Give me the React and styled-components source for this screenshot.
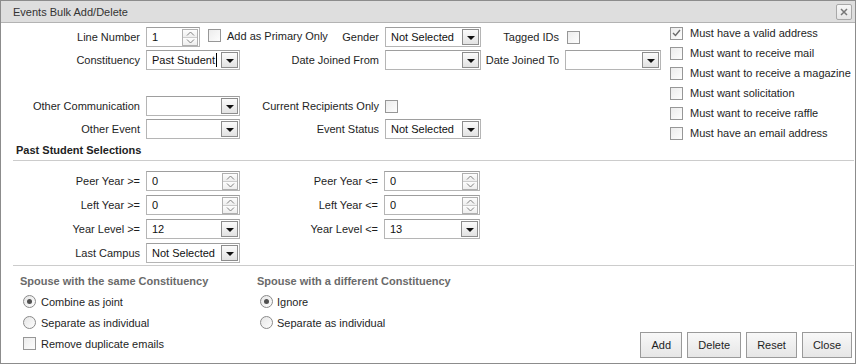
import React from 'react';
import styled, { createGlobalStyle } from 'styled-components';

const Global = createGlobalStyle`
  * { box-sizing: border-box; }
  html, body { margin: 0; padding: 0; background: #fff; }
  body {
    font-family: "Liberation Sans", Arial, sans-serif;
    font-size: 11px;
    color: #1e1e1e;
  }
`;

const Dialog = styled.div`
  width: 856px;
  height: 364px;
  border: 1px solid #8c8c8c;
  display: flex;
  flex-direction: column;
  background: #fff;
`;

const TitleBar = styled.div`
  height: 22px;
  flex: none;
  background: #dedede;
  border-bottom: 1px solid #b3b3b3;
  display: flex;
  align-items: center;
  justify-content: space-between;
  padding: 0 3px 0 12px;
`;

const Title = styled.span`
  color: #333;
  font-size: 11px;
`;

const CloseButton = styled.span`
  width: 16px;
  height: 16px;
  border: 1px solid #a8a8a8;
  border-radius: 2px;
  background: linear-gradient(#f6f6f6, #e6e6e6);
  display: flex;
  align-items: center;
  justify-content: center;
`;

const Body = styled.div`
  flex: 1;
  display: flex;
  flex-direction: column;
  padding: 0 3px 0 12px;
`;

const TopSection = styled.div`
  display: flex;
  align-items: flex-start;
  gap: 9px;
`;

const FieldGrid = styled.div`
  display: grid;
  grid-template-columns: 127px 94px 133px 96px 72px 96px;
  grid-template-rows: repeat(5, 20px);
  column-gap: 6px;
  row-gap: 3px;
  margin-top: 4px;
`;

const Label = styled.span`
  display: flex;
  align-items: center;
  justify-content: flex-end;
  white-space: nowrap;
  grid-column: ${p => p.$col || 'auto'};
  grid-row: ${p => p.$row || 'auto'};
`;

const Cell = styled.div`
  display: flex;
  align-items: center;
  white-space: nowrap;
  grid-column: ${p => p.$col || 'auto'};
  grid-row: ${p => p.$row || 'auto'};
`;

const Spacer = styled.span`
  flex: 1;
`;

const SelectBox = styled.div`
  width: ${p => p.$w || 94}px;
  height: 20px;
  flex: none;
  border: 1px solid #b5b5b5;
  border-top-color: #9e9e9e;
  background: #fff;
  display: flex;
  align-items: center;
  padding: 0 1px 0 5px;
`;

const FieldText = styled.span`
  flex: 1;
  white-space: nowrap;
  overflow: hidden;
  display: flex;
  align-items: center;
  color: #111;
  font-size: 11px;
`;

const Caret = styled.span`
  width: 1px;
  height: 14px;
  background: #000;
  margin-left: 1px;
`;

const DropButton = styled.span`
  width: 17px;
  height: 16px;
  border: 1px solid #8d8d8d;
  background: linear-gradient(#fbfbfb, #e2e2e2);
  display: flex;
  align-items: center;
  justify-content: center;
`;

const Arrow = styled.span`
  width: 0;
  height: 0;
  border-left: 4px solid transparent;
  border-right: 4px solid transparent;
  border-top: 4px solid #111;
  margin-top: 1px;
`;

const SpinButtons = styled.div`
  width: 16px;
  height: 17px;
  display: flex;
  flex-direction: column;
  border: 1px solid #b0b0b0;
`;

const SpinHalf = styled.span`
  flex: 1;
  display: flex;
  align-items: center;
  justify-content: center;
  background: linear-gradient(#fdfdfd, #eeeeee);
  & + & { border-top: 1px solid #cccccc; }
`;

const Box = styled.span`
  width: 13px;
  height: 13px;
  flex: none;
  border: 1px solid #979797;
  background: linear-gradient(135deg, #ececec, #fdfdfd);
  display: flex;
  align-items: center;
  justify-content: center;
  margin-left: ${p => p.$ml || 0}px;
`;

const RadioCircle = styled.span`
  width: 13px;
  height: 13px;
  flex: none;
  border: 1px solid #8a8a8a;
  border-radius: 50%;
  background: linear-gradient(135deg, #e6e6e6, #fdfdfd);
  display: flex;
  align-items: center;
  justify-content: center;
`;

const Dot = styled.span`
  width: 5px;
  height: 5px;
  border-radius: 50%;
  background: #505050;
`;

const OptionList = styled.div`
  display: flex;
  flex-direction: column;
`;

const OptionRow = styled.div`
  height: ${p => p.$h || 20}px;
  display: flex;
  align-items: center;
  gap: ${p => p.$gap || 7}px;
  white-space: nowrap;
`;

const InlineOption = styled.span`
  display: flex;
  align-items: center;
  gap: 6px;
  margin-left: 8px;
  margin-top: -3px;
  white-space: nowrap;
`;

const SectionHeading = styled.div`
  font-weight: bold;
  color: #222;
  line-height: 14px;
  padding-left: 3px;
`;

const Divider = styled.div`
  height: 1px;
  background: #cccccc;
  margin-top: ${p => p.$mt || 0}px;
  margin-right: -2px;
`;

const RangeGrid = styled.div`
  display: grid;
  grid-template-columns: 127px 94px 132px 96px;
  grid-auto-rows: 20px;
  column-gap: 6px;
  row-gap: 4px;
  margin-top: 10px;
`;

const SpouseSection = styled.div`
  flex: 1;
  display: flex;
  padding: 8px 0 5px;
`;

const SpouseColumn = styled.div`
  width: ${p => p.$w ? `${p.$w}px` : 'auto'};
  padding-left: ${p => p.$pl || 0}px;
  display: flex;
  flex-direction: column;
`;

const SpouseHeading = styled.div`
  font-weight: bold;
  color: #6a6a6a;
  line-height: 14px;
  margin-bottom: 3px;
`;

const Options = styled.div`
  padding-left: 3px;
  display: flex;
  flex-direction: column;
`;

const ButtonBar = styled.div`
  margin-left: auto;
  align-self: flex-end;
  display: flex;
  gap: 5px;
`;

const Button = styled.button`
  height: 26px;
  min-width: 42px;
  padding: 0 10px;
  border: 1px solid #9a9a9a;
  background: linear-gradient(#f8f8f8, #e6e6e6);
  font-family: "Liberation Sans", Arial, sans-serif;
  font-size: 11px;
  color: #1e1e1e;
  cursor: pointer;
`;

const Select = ({ w, value, caret }) => (
  <SelectBox $w={w}>
    <FieldText>
      {value}
      {caret && <Caret />}
    </FieldText>
    <DropButton><Arrow /></DropButton>
  </SelectBox>
);

const Chevron = ({ up }) => (
  <svg width="9" height="5" viewBox="0 0 9 5">
    <polyline
      points={up ? '1,4.5 4.5,1 8,4.5' : '1,0.5 4.5,4 8,0.5'}
      fill="none"
      stroke="#808080"
      strokeWidth="1"
    />
  </svg>
);

const Spinner = ({ w, value }) => (
  <SelectBox $w={w}>
    <FieldText>{value}</FieldText>
    <SpinButtons>
      <SpinHalf><Chevron up /></SpinHalf>
      <SpinHalf><Chevron /></SpinHalf>
    </SpinButtons>
  </SelectBox>
);

const Checkbox = ({ checked, ml }) => (
  <Box $ml={ml}>
    {checked && (
      <svg width="9" height="8" viewBox="0 0 9 8">
        <polyline points="1,4 3.5,6.5 8,1" fill="none" stroke="#6b6b6b" strokeWidth="1.4" />
      </svg>
    )}
  </Box>
);

const Radio = ({ checked }) => (
  <RadioCircle>{checked && <Dot />}</RadioCircle>
);

const mustOptions = [
  ['Must have a valid address', true],
  ['Must want to receive mail', false],
  ['Must want to receive a magazine', false],
  ['Must want solicitation', false],
  ['Must want to receive raffle', false],
  ['Must have an email address', false],
];

export default function App() {
  return (
    <>
      <Global />
      <Dialog>
        <TitleBar>
          <Title>Events Bulk Add/Delete</Title>
          <CloseButton>
            <svg width="8" height="8" viewBox="0 0 8 8">
              <path d="M1 1 L7 7 M7 1 L1 7" stroke="#777" strokeWidth="1.5" />
            </svg>
          </CloseButton>
        </TitleBar>
        <Body>
          <TopSection>
            <FieldGrid>
              <Label $col="1" $row="1">Line Number</Label>
              <Cell $col="2 / 4" $row="1">
                <Spinner w={54} value="1" />
                <InlineOption>
                  <Checkbox />
                  <span>Add as Primary Only</span>
                </InlineOption>
                <Spacer />
                <Label>Gender</Label>
              </Cell>
              <Cell $col="4" $row="1"><Select w={96} value="Not Selected" /></Cell>
              <Label $col="5" $row="1">Tagged IDs</Label>
              <Cell $col="6" $row="1"><Checkbox ml={2} /></Cell>

              <Label $col="1" $row="2">Constituency</Label>
              <Cell $col="2" $row="2"><Select value="Past Student" caret /></Cell>
              <Label $col="3" $row="2">Date Joined From</Label>
              <Cell $col="4" $row="2"><Select w={96} value="" /></Cell>
              <Label $col="5" $row="2">Date Joined To</Label>
              <Cell $col="6" $row="2"><Select w={96} value="" /></Cell>

              <Label $col="1" $row="4">Other Communication</Label>
              <Cell $col="2" $row="4"><Select value="" /></Cell>
              <Label $col="3" $row="4">Current Recipients Only</Label>
              <Cell $col="4" $row="4"><Checkbox /></Cell>

              <Label $col="1" $row="5">Other Event</Label>
              <Cell $col="2" $row="5"><Select value="" /></Cell>
              <Label $col="3" $row="5">Event Status</Label>
              <Cell $col="4" $row="5"><Select w={96} value="Not Selected" /></Cell>
            </FieldGrid>
            <OptionList>
              {mustOptions.map(([text, checked]) => (
                <OptionRow key={text}>
                  <Checkbox checked={checked} />
                  <span>{text}</span>
                </OptionRow>
              ))}
            </OptionList>
          </TopSection>

          <SectionHeading>Past Student Selections</SectionHeading>
          <Divider $mt={3} />

          <RangeGrid>
            <Label>{'Peer Year >='}</Label>
            <Cell><Spinner value="0" /></Cell>
            <Label>{'Peer Year <='}</Label>
            <Cell><Spinner w={96} value="0" /></Cell>

            <Label>{'Left Year >='}</Label>
            <Cell><Spinner value="0" /></Cell>
            <Label>{'Left Year <='}</Label>
            <Cell><Spinner w={96} value="0" /></Cell>

            <Label>{'Year Level >='}</Label>
            <Cell><Select value="12" /></Cell>
            <Label>{'Year Level <='}</Label>
            <Cell><Select w={96} value="13" /></Cell>

            <Label>Last Campus</Label>
            <Cell><Select value="Not Selected" /></Cell>
          </RangeGrid>

          <Divider $mt={2} />

          <SpouseSection>
            <SpouseColumn $w={244} $pl={7}>
              <SpouseHeading>Spouse with the same Constituency</SpouseHeading>
              <Options>
                <OptionRow $h={21} $gap={5}><Radio checked /><span>Combine as joint</span></OptionRow>
                <OptionRow $h={21} $gap={5}><Radio /><span>Separate as individual</span></OptionRow>
                <OptionRow $h={21} $gap={5}><Checkbox /><span>Remove duplicate emails</span></OptionRow>
              </Options>
            </SpouseColumn>
            <SpouseColumn>
              <SpouseHeading>Spouse with a different Constituency</SpouseHeading>
              <Options>
                <OptionRow $h={21} $gap={4}><Radio checked /><span>Ignore</span></OptionRow>
                <OptionRow $h={21} $gap={4}><Radio /><span>Separate as individual</span></OptionRow>
              </Options>
            </SpouseColumn>
            <ButtonBar>
              <Button>Add</Button>
              <Button>Delete</Button>
              <Button>Reset</Button>
              <Button>Close</Button>
            </ButtonBar>
          </SpouseSection>
        </Body>
      </Dialog>
    </>
  );
}
